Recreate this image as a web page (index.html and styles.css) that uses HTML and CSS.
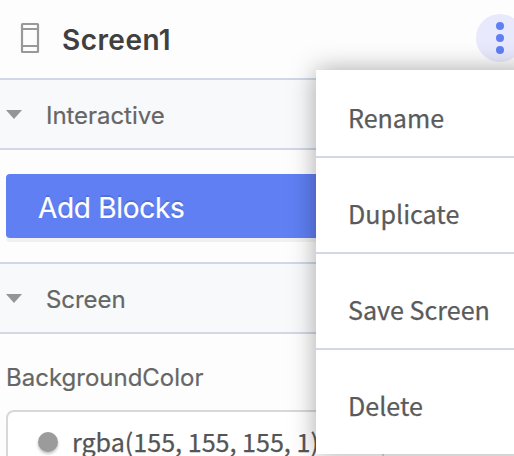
FILE: index.html
```
<!DOCTYPE html>
<html lang="en">
<head>
<meta charset="utf-8">
<title>Screen1</title>
<link rel="stylesheet" href="styles.css">
</head>
<body>
<main class="panel">
  <header class="header">
    <svg class="device" viewBox="0 0 20 32" fill="none" stroke="#999" stroke-width="2.2"><rect x="2" y="2" width="16" height="28" rx=".5"/><path d="M2 7H18M2 24H18"/></svg>
    <h1 class="title">Screen1</h1>
    <button class="more" aria-label="More"><i></i><i></i><i></i></button>
  </header>
  <section class="section">
    <span class="caret"></span><h2 class="section-name">Interactive</h2>
  </section>
  <div class="actions"><button class="add">Add Blocks</button></div>
  <section class="section">
    <span class="caret"></span><h2 class="section-name">Screen</h2>
  </section>
  <div class="property">
    <label class="label">BackgroundColor</label>
    <div class="field"><span class="swatch"></span><span class="value">rgba(155, 155, 155, 1)</span></div>
  </div>
</main>
<nav class="menu">
  <div class="item">Rename</div>
  <div class="item">Duplicate</div>
  <div class="item">Save Screen</div>
  <div class="item">Delete</div>
</nav>
</body>
</html>
```
FILE: styles.css
```
* { box-sizing: border-box; }
html, body { margin: 0; height: 456px; overflow: hidden; }
body { position: relative; background: #fdfdfd; color: #666; font-family: Inter, "Liberation Sans", sans-serif; }
h1, h2 { margin: 0; }
button { border: 0; padding: 0; font: inherit; }
.panel { width: 524px; height: 456px; overflow: hidden; }
.header { display: flex; align-items: center; height: 78px; padding-left: 20px; }
.device { width: 20px; height: 32px; margin: 0 22px 2px 0; }
.title { font-size: 28px; line-height: 36px; font-weight: 600; color: #404040; letter-spacing: .45px; margin-top: 2px; }
.more { display: flex; flex-direction: column; align-items: center; justify-content: center; gap: 4px; width: 48px; height: 48px; margin: 0 0 2px auto; border-radius: 50%; background: #e8e9fc; }
.more i { width: 8px; height: 8px; border-radius: 50%; background: #5f7ff3; }
.section { display: flex; align-items: center; height: 72px; padding-left: 6px; background: #f8f9fb; border-top: 2px solid #d1d7e6; border-bottom: 2px solid #d1d7e6; }
.caret { border: 8px solid transparent; border-top: 9px solid #959595; border-bottom: 0; }
.section-name { margin: 4px 0 0 24px; font-size: 24px; line-height: 32px; font-weight: 400; letter-spacing: -.05px; -webkit-text-stroke: .2px; }
.actions { height: 112px; padding: 24px 6px; }
.add { display: block; width: 480px; height: 64px; padding: 4px 0 0 32px; text-align: left; color: #fff; font-size: 28px; letter-spacing: -.3px; border-radius: 4px; background: #5f7ff3; box-shadow: 0 4px 0 #f1f1f1; text-shadow: 0 -2px 0 rgba(0,0,0,.12); -webkit-text-stroke: .2px; }
.property { padding: 28px 6px 0; }
.label { display: block; height: 48px; line-height: 32px; font-size: 24px; -webkit-text-stroke: .2px; }
.field { display: flex; align-items: center; width: 378px; height: 64px; padding-left: 30px; border: 2px solid #d8d8d8; border-radius: 8px; background: #fff; }
.swatch { width: 20px; height: 20px; border-radius: 50%; background: #9b9b9b; box-shadow: 0 2px 3px rgba(0,0,0,.25); margin-right: 14px; }
.value { margin-top: -3px; font: 25.1px/32px "Noto Sans CJK SC", sans-serif; color: #555; white-space: nowrap; -webkit-text-stroke: .25px; }
.menu { position: absolute; left: 316px; top: 70px; width: 220px; height: 384px; background: #fff; box-shadow: 0 0 24px rgba(0,0,0,.34); color: #5a5a5a; font: 25.1px/32px "Noto Sans CJK SC", sans-serif; white-space: nowrap; -webkit-text-stroke: .25px; }
.item { height: 96px; padding: 39px 0 0 32px; border-bottom: 2px solid #d1d7e6; }
.item:first-child { height: 88px; padding-top: 31px; }
.item:last-child { border: 0; }
```
